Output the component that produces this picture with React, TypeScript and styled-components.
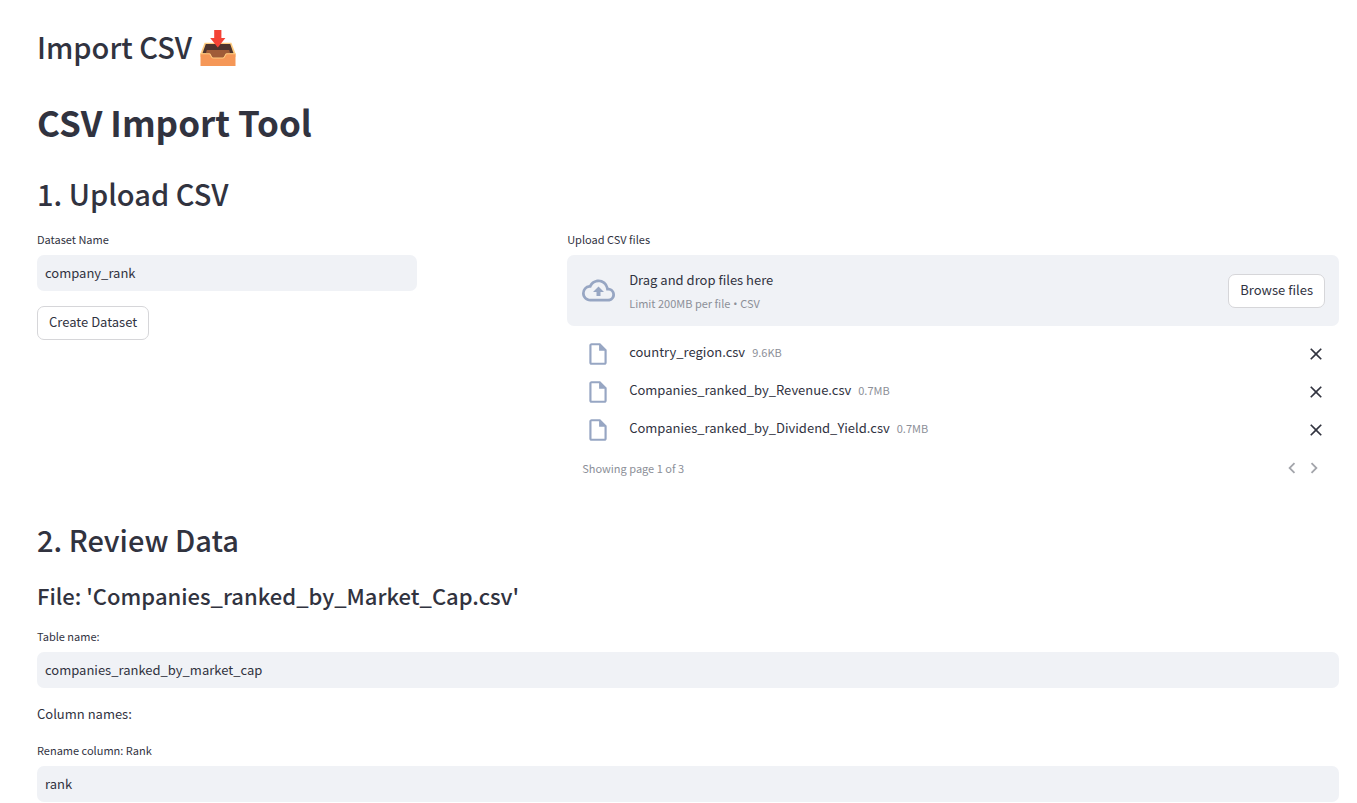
import React, { useState } from "react";
import styled, { createGlobalStyle } from "styled-components";
import {
  MdOutlineCloudUpload,
  MdOutlineInsertDriveFile,
  MdClose,
  MdChevronLeft,
  MdChevronRight,
} from "react-icons/md";

const GlobalStyle = createGlobalStyle`
  *, *::before, *::after { box-sizing: border-box; }
  body {
    margin: 0;
    background: #ffffff;
    color: #31333f;
    font-family: "Source Sans Pro", "Noto Sans CJK SC", "Open Sans", sans-serif;
    font-size: 13px;
    line-height: 24px;
  }
  button, input { font: inherit; color: inherit; }
`;

const Page = styled.main`
  padding: 26px 18px 0 37px;
`;

const PageTitle = styled.h2`
  display: flex;
  align-items: center;
  gap: 8px;
  margin: 0 0 32px;
  font-size: 29px;
  font-weight: 500;
  line-height: 40px;
`;

const Tray = styled.svg`
  flex: none;
  margin-top: 4px;
`;

const ToolTitle = styled.h1`
  margin: 0 0 27px;
  font-size: 35px;
  font-weight: 700;
  line-height: 48px;
`;

const SectionTitle = styled.h2`
  margin: 0 0 16px;
  font-size: 29px;
  font-weight: 500;
  line-height: 40px;
`;

const FileTitle = styled.h3`
  margin: 20px 0 15px;
  font-size: 22px;
  font-weight: 500;
  line-height: 32px;
`;

const Columns = styled.div`
  display: grid;
  grid-template-columns: 33fr 67fr;
  gap: 150px;
  align-items: start;
  margin-bottom: 30px;
`;

const Label = styled.label`
  display: block;
  margin-bottom: 6px;
  font-size: 11px;
  line-height: 20px;
`;

const TextInput = styled.input`
  display: block;
  width: 100%;
  height: 36px;
  padding: 0 8px 2px;
  border: 0;
  border-radius: 7px;
  background: #f0f2f6;
  outline: none;
`;

const Field = styled.div`
  margin-bottom: 15px;
`;

const Button = styled.button`
  height: 34px;
  padding: 0 11px 2px;
  border: 1px solid #d6d6d9;
  border-radius: 7px;
  background: #ffffff;
  white-space: nowrap;
  cursor: pointer;
`;

const Dropzone = styled.section`
  display: flex;
  align-items: center;
  gap: 14px;
  height: 71px;
  padding: 0 14px 0 15px;
  border-radius: 7px;
  background: #f0f2f6;
`;

const CloudIcon = styled(MdOutlineCloudUpload)`
  flex: none;
  color: #97a6c3;
`;

const Instructions = styled.div`
  flex: 1;
  padding-top: 2px;
`;

const Muted = styled.small`
  display: block;
  font-size: 11px;
  line-height: 22px;
  color: #8c8f98;
`;

const Bullet = styled.span`
  font-family: "Open Sans", sans-serif;
`;

const FileList = styled.ul`
  margin: 0;
  padding: 7px 14px 0 15px;
  list-style: none;
`;

const FileRow = styled.li`
  display: flex;
  align-items: center;
  height: 38px;
`;

const FileIcon = styled(MdOutlineInsertDriveFile)`
  flex: none;
  margin: 4px 18px 0 3px;
  color: #97a6c3;
`;

const FileName = styled.span`
  margin-right: 7px;
`;

const IconButton = styled.button<{ $muted?: boolean }>`
  display: flex;
  align-items: center;
  justify-content: center;
  width: 22px;
  height: 22px;
  padding: 0;
  border: 0;
  background: transparent;
  color: ${(p) => (p.$muted ? "#a3a5ab" : "#31333f")};
  cursor: pointer;
`;

const DeleteButton = styled(IconButton)`
  margin: 4px -2px 0 auto;
`;

const Pagination = styled.div`
  display: flex;
  align-items: center;
  justify-content: space-between;
  height: 42px;
  padding: 0 14px 0 15px;
`;

const Pager = styled.div`
  display: flex;
`;

const Paragraph = styled.p`
  margin: 0 0 15px;
  line-height: 22px;
`;

const files = [
  { name: "country_region.csv", size: "9.6KB" },
  { name: "Companies_ranked_by_Revenue.csv", size: "0.7MB" },
  { name: "Companies_ranked_by_Dividend_Yield.csv", size: "0.7MB" },
];

function InboxTray() {
  return (
    <Tray width="36" height="36" viewBox="0 0 36 36" role="img" aria-label="Inbox tray">
      <path d="M4.6 12.8H31.4L35.5 23.6V27H.5V23.6Z" fill="#ffcc80" />
      <path d="M5.8 14H30.2L33.6 23.4H2.4Z" fill="#4e342e" />
      <path d="M6.8 20H29.2L30.2 23.4L25.2 29H10.8L5.8 23.4Z" fill="#a05c38" />
      <path
        d="M.5 23.8H9.4C11 23.8 10.8 28 13 28H23C25.2 28 25 23.8 26.6 23.8H35.5V36H.5Z"
        fill="#f59757"
      />
      <path
        d="M.5 23.7H9.4C11 23.7 10.8 28 13 28H23C25.2 28 25 23.7 26.6 23.7H35.5"
        fill="none"
        stroke="#ffcc80"
        strokeWidth="1.1"
      />
      <path d="M14.2 0H21.4V8H25.4L17.8 17.4L10.2 8H14.2Z" fill="#f44336" />
    </Tray>
  );
}

interface TextFieldProps {
  id: string;
  label: string;
  initial: string;
}

function TextField({ id, label, initial }: TextFieldProps) {
  const [value, setValue] = useState(initial);
  return (
    <Field>
      <Label htmlFor={id}>{label}</Label>
      <TextInput id={id} type="text" value={value} onChange={(e) => setValue(e.target.value)} />
    </Field>
  );
}

export default function App() {
  return (
    <>
      <GlobalStyle />
      <Page>
        <PageTitle>
          Import CSV <InboxTray />
        </PageTitle>
        <ToolTitle>CSV Import Tool</ToolTitle>

        <SectionTitle>1. Upload CSV</SectionTitle>
        <Columns>
          <div>
            <TextField id="dataset" label="Dataset Name" initial="company_rank" />
            <Button type="button">Create Dataset</Button>
          </div>
          <div>
            <Label htmlFor="browse">Upload CSV files</Label>
            <Dropzone>
              <CloudIcon size={33} />
              <Instructions>
                <div>Drag and drop files here</div>
                <Muted>
                  Limit 200MB per file<Bullet> • </Bullet>CSV
                </Muted>
              </Instructions>
              <Button id="browse" type="button">Browse files</Button>
            </Dropzone>
            <FileList>
              {files.map((file) => (
                <FileRow key={file.name}>
                  <FileIcon size={26} />
                  <FileName>{file.name}</FileName>
                  <Muted>{file.size}</Muted>
                  <DeleteButton type="button" aria-label={`Remove ${file.name}`}>
                    <MdClose size={20} />
                  </DeleteButton>
                </FileRow>
              ))}
            </FileList>
            <Pagination>
              <Muted>Showing page 1 of 3</Muted>
              <Pager>
                <IconButton $muted type="button" aria-label="Previous page">
                  <MdChevronLeft size={22} />
                </IconButton>
                <IconButton $muted type="button" aria-label="Next page">
                  <MdChevronRight size={22} />
                </IconButton>
              </Pager>
            </Pagination>
          </div>
        </Columns>

        <SectionTitle>2. Review Data</SectionTitle>
        <FileTitle>File: 'Companies_ranked_by_Market_Cap.csv'</FileTitle>
        <TextField id="table" label="Table name:" initial="companies_ranked_by_market_cap" />
        <Paragraph>Column names:</Paragraph>
        <TextField id="rank" label="Rename column: Rank" initial="rank" />
      </Page>
    </>
  );
}
